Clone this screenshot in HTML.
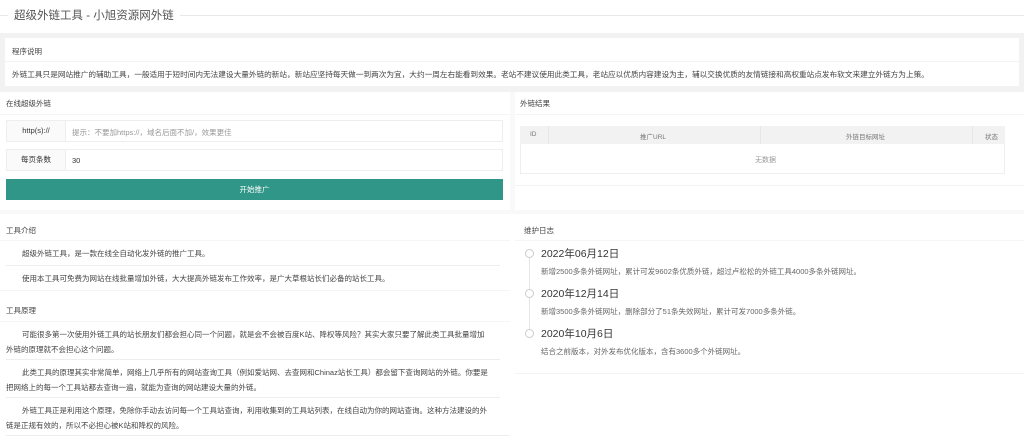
<!DOCTYPE html><html><head><meta charset="utf-8"><style>
*{margin:0;padding:0;box-sizing:border-box}
body{width:1024px;height:448px;overflow:hidden;background:#fff;font-family:"Liberation Sans","Noto Sans CJK SC",sans-serif;color:#333;position:relative;font-size:8px}
.a{position:absolute;white-space:nowrap}
.hl{position:absolute;height:1px;background:#eee}
.s{font-size:7.5px;color:#444}
</style></head><body>
<div class="hl" style="left:0;top:15px;width:1024px;background:#e8e8e8"></div>
<div class="a" style="left:8px;top:7px;background:#fff;padding:0 6px;font-size:11.5px;color:#555">超级外链工具 - 小旭资源网外链</div>
<div class="a" style="left:0;top:33px;width:1024px;height:59px;background:#f2f2f2"></div>
<div class="a" style="left:5px;top:38px;width:1014px;height:48px;background:#fff"></div>
<div class="hl" style="left:5px;top:61px;width:1014px;background:#f3f3f3"></div>
<div class="a s" style="left:12px;top:46px">程序说明</div>
<div class="a s" style="left:12px;top:69px;font-size:7.65px">外链工具只是网站推广的辅助工具，一般适用于短时间内无法建设大量外链的新站，新站应坚持每天做一到两次为宜，大约一周左右能看到效果。老站不建议使用此类工具，老站应以优质内容建设为主，辅以交换优质的友情链接和高权重站点发布软文来建立外链方为上策。</div>
<div class="a" style="left:510px;top:92px;width:5px;height:120px;background:#f9f9f9"></div>
<div class="a" style="left:0;top:210px;width:1024px;height:4px;background:#f9f9f9"></div>
<div class="a s" style="left:6px;top:98px">在线超级外链</div>
<div class="hl" style="left:0;top:114px;width:510px;background:#f5f5f5"></div>
<div class="a" style="left:6px;top:120px;width:497px;height:22px;border:1px solid #eee"></div>
<div class="a" style="left:6px;top:120px;width:60px;height:22px;background:#fafafa;border:1px solid #eee;text-align:center;line-height:20px;font-size:7.5px">http(s)://</div>
<div class="a" style="left:72px;top:127px;font-size:7.5px;color:#999">提示：不要加https://，域名后面不加/，效果更佳</div>
<div class="a" style="left:6px;top:149px;width:497px;height:22px;border:1px solid #eee"></div>
<div class="a" style="left:6px;top:149px;width:60px;height:22px;background:#fafafa;border:1px solid #eee;text-align:center;line-height:20px;font-size:7.5px">每页条数</div>
<div class="a" style="left:72px;top:156px;font-size:7.5px">30</div>
<div class="a" style="left:6px;top:179px;width:497px;height:21px;background:#2f9688;color:#fff;text-align:center;line-height:21px;font-size:7.5px">开始推广</div>
<div class="a s" style="left:520px;top:98px">外链结果</div>
<div class="hl" style="left:515px;top:114px;width:509px;background:#f5f5f5"></div>
<div class="a" style="left:520px;top:126px;width:485px;height:48px;border:1px solid #eee"></div>
<div class="a" style="left:520px;top:126px;width:485px;height:18px;background:#f2f2f2"></div>
<div class="a" style="left:548px;top:126px;width:1px;height:18px;background:#e6e6e6"></div>
<div class="a" style="left:760px;top:126px;width:1px;height:18px;background:#e6e6e6"></div>
<div class="a" style="left:972px;top:126px;width:1px;height:18px;background:#e6e6e6"></div>
<div class="a" style="left:530px;top:131px;font-size:6.5px;color:#777">ID</div>
<div class="a" style="left:640px;top:131px;font-size:6.5px;color:#777">推广URL</div>
<div class="a" style="left:846px;top:131px;font-size:6.5px;color:#777">外链目标网址</div>
<div class="a" style="left:985px;top:131px;font-size:6.5px;color:#777">状态</div>
<div class="a" style="left:755px;top:155px;font-size:7px;color:#999">无数据</div>
<div class="hl" style="left:515px;top:185px;width:509px;background:#f3f3f3"></div>

<div class="a s" style="left:6px;top:225px">工具介绍</div>
<div class="hl" style="left:0;top:240px;width:510px;background:#f5f5f5"></div>
<div class="a s" style="left:22px;top:248px">超级外链工具，是一款在线全自动化发外链的推广工具。</div>
<div class="hl" style="left:6px;top:265px;width:494px"></div>
<div class="a s" style="left:22px;top:273px">使用本工具可免费为网站在线批量增加外链，大大提高外链发布工作效率，是广大草根站长们必备的站长工具。</div>
<div class="hl" style="left:0;top:290px;width:510px;background:#f5f5f5"></div>
<div class="a s" style="left:6px;top:305px">工具原理</div>
<div class="hl" style="left:0;top:321px;width:510px;background:#f5f5f5"></div>
<div class="a s" style="left:22px;top:329px">可能很多第一次使用外链工具的站长朋友们都会担心同一个问题，就是会不会被百度K站、降权等风险？其实大家只要了解此类工具批量增加</div>
<div class="a s" style="left:6px;top:344px">外链的原理就不会担心这个问题。</div>
<div class="hl" style="left:6px;top:359px;width:494px"></div>
<div class="a s" style="left:22px;top:367px">此类工具的原理其实非常简单，网络上几乎所有的网站查询工具（例如爱站网、去查网和Chinaz站长工具）都会留下查询网站的外链。你要是</div>
<div class="a s" style="left:6px;top:382px">把网络上的每一个工具站都去查询一遍，就能为查询的网站建设大量的外链。</div>
<div class="hl" style="left:6px;top:397px;width:494px"></div>
<div class="a s" style="left:22px;top:405px">外链工具正是利用这个原理，免除你手动去访问每一个工具站查询，利用收集到的工具站列表，在线自动为你的网站查询。这种方法建设的外</div>
<div class="a s" style="left:6px;top:420px">链是正规有效的，所以不必担心被K站和降权的风险。</div>
<div class="hl" style="left:6px;top:435px;width:504px"></div>

<div class="a s" style="left:524px;top:225px">维护日志</div>
<div class="hl" style="left:515px;top:240px;width:509px;background:#f5f5f5"></div>
<div class="a" style="left:529px;top:256px;width:1px;height:80px;background:#e6e6e6"></div>
<div class="a" style="left:525px;top:249px;width:9px;height:9px;border:1px solid #ccc;border-radius:50%;background:#fff"></div>
<div class="a" style="left:541px;top:246px;font-size:10.5px;color:#333">2022年06月12日</div>
<div class="a s" style="left:541px;top:266px;color:#666">新增2500多条外链网址，累计可发9602条优质外链，超过卢松松的外链工具4000多条外链网址。</div>
<div class="a" style="left:525px;top:289px;width:9px;height:9px;border:1px solid #ccc;border-radius:50%;background:#fff"></div>
<div class="a" style="left:541px;top:286px;font-size:10.5px;color:#333">2020年12月14日</div>
<div class="a s" style="left:541px;top:306px;color:#666">新增3500多条外链网址，删除部分了51条失效网址，累计可发7000多条外链。</div>
<div class="a" style="left:525px;top:329px;width:9px;height:9px;border:1px solid #ccc;border-radius:50%;background:#fff"></div>
<div class="a" style="left:541px;top:326px;font-size:10.5px;color:#333">2020年10月6日</div>
<div class="a s" style="left:541px;top:346px;color:#666">结合之前版本，对外发布优化版本，含有3600多个外链网址。</div>
<div class="hl" style="left:515px;top:373px;width:509px;background:#f3f3f3"></div>
</body></html>
